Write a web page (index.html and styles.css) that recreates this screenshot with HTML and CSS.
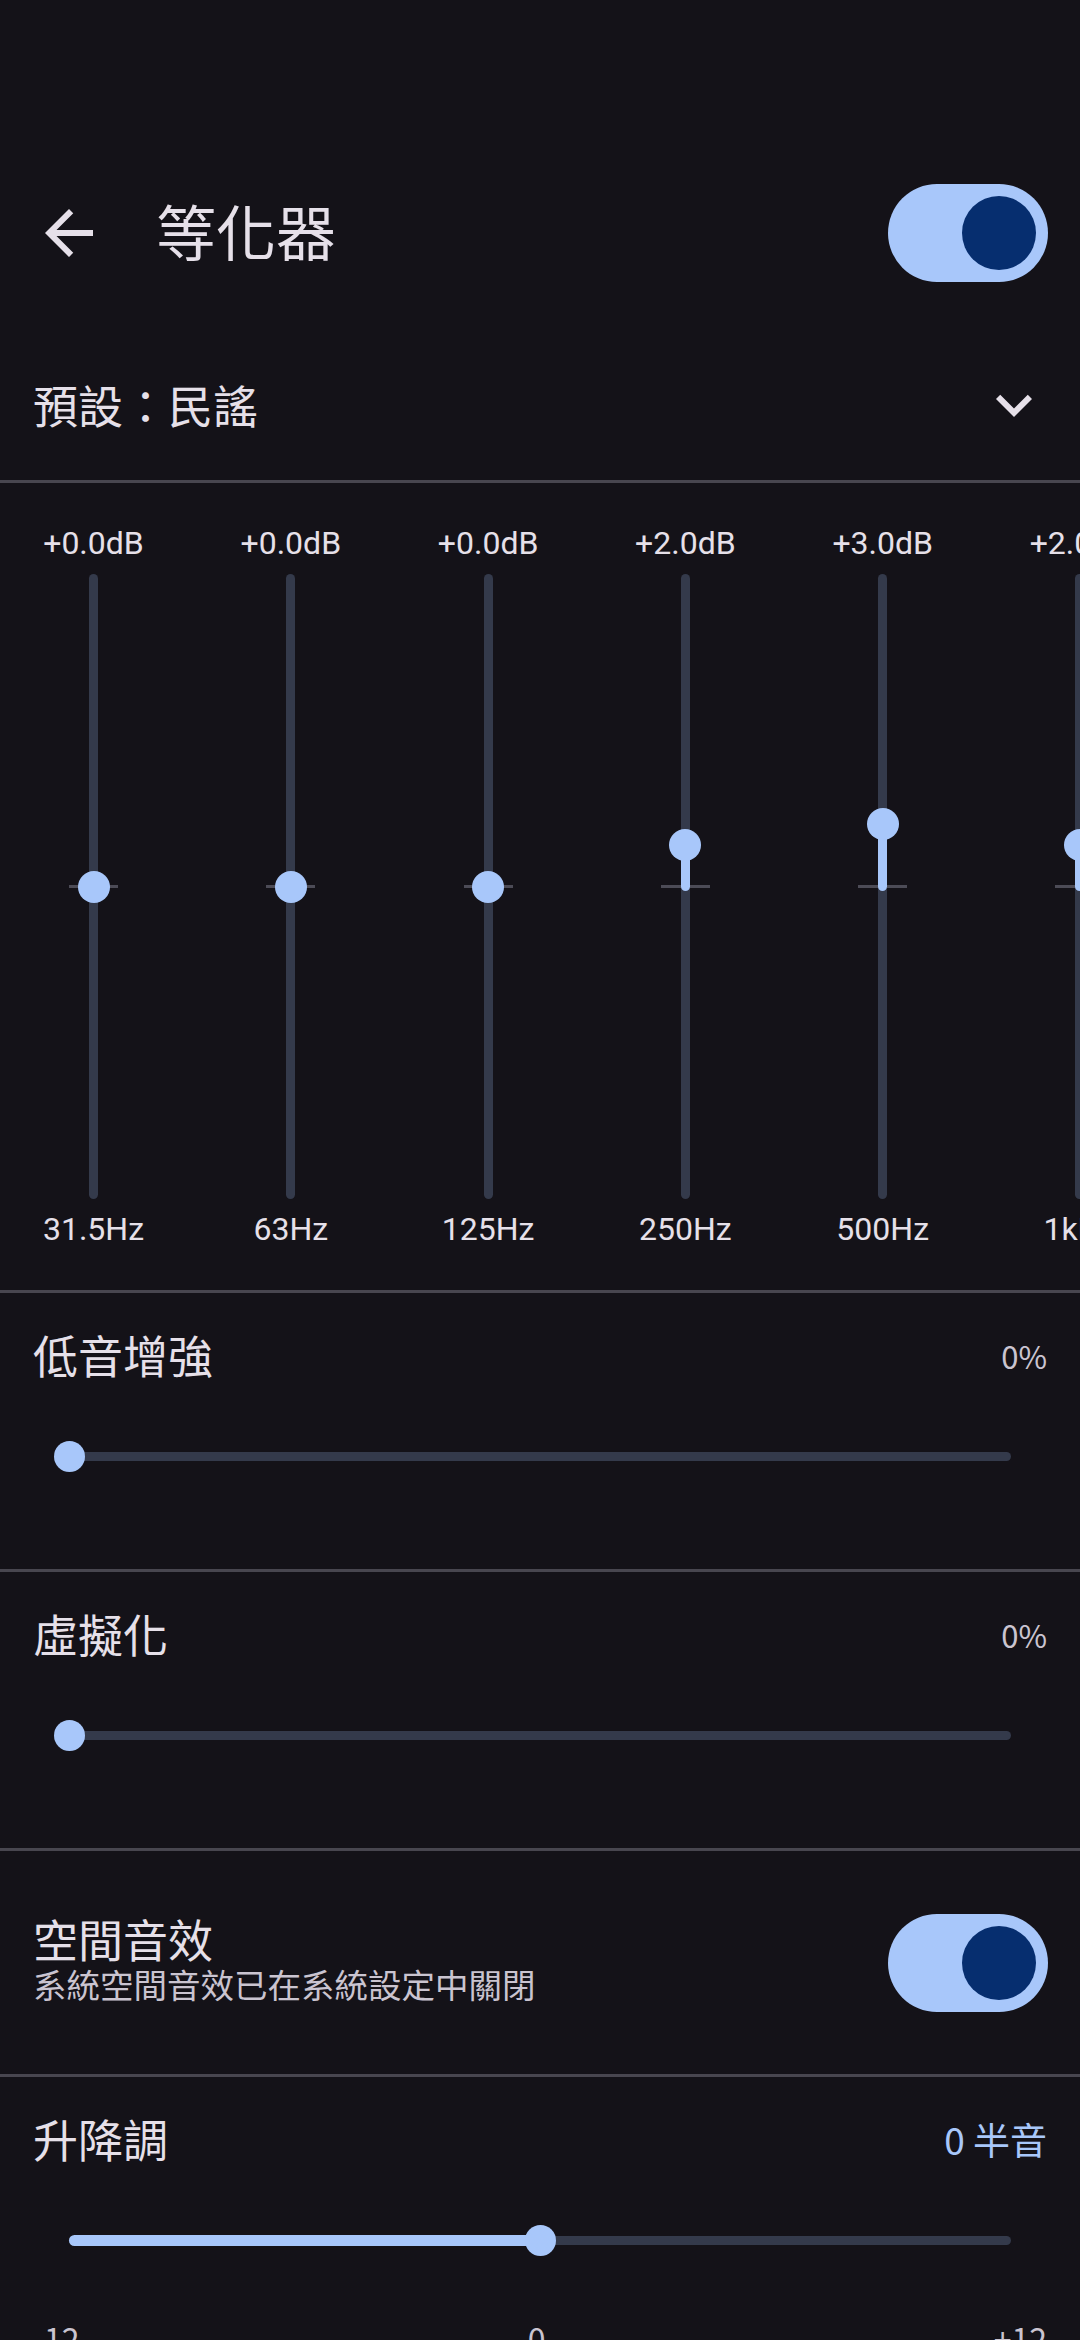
FILE: index.html
```html
<!DOCTYPE html>
<html lang="zh-Hant">
	<head>
		<meta charset="UTF-8" />
		<meta name="viewport" content="width=device-width, initial-scale=1.0" />
		<title>等化器</title>
		<link rel="stylesheet" href="styles.css">
	</head>
	<body>
		<div class="status-space"></div>
		<header class="app-bar">
			<svg class="icon back" viewBox="0 0 24 24" aria-label="返回">
				<path d="M20 11H7.830l5.59-5.59L12 4l-8 8 8 8 1.41-1.41L7.83 13H20v-2z" />
			</svg>
			<h1>等化器</h1>
			<div class="switch on"><span class="knob"></span></div>
		</header>

		<div class="preset-row">
			<span>預設：民謠</span>
			<svg class="icon chevron" viewBox="0 0 24 24">
				<path d="M16.59 8.59L12 13.17 7.41 8.59 6 10l6 6 6-6z" />
			</svg>
		</div>

		<section class="eq">
			<div class="band" style="--db: 0">
				<div class="band-val">+0.0dB</div>
				<div class="vtrack"><i class="tick"></i><i class="fill"></i><i class="thumb"></i></div>
				<div class="band-freq">31.5Hz</div>
			</div>
			<div class="band" style="--db: 0">
				<div class="band-val">+0.0dB</div>
				<div class="vtrack"><i class="tick"></i><i class="fill"></i><i class="thumb"></i></div>
				<div class="band-freq">63Hz</div>
			</div>
			<div class="band" style="--db: 0">
				<div class="band-val">+0.0dB</div>
				<div class="vtrack"><i class="tick"></i><i class="fill"></i><i class="thumb"></i></div>
				<div class="band-freq">125Hz</div>
			</div>
			<div class="band" style="--db: 2">
				<div class="band-val">+2.0dB</div>
				<div class="vtrack"><i class="tick"></i><i class="fill"></i><i class="thumb"></i></div>
				<div class="band-freq">250Hz</div>
			</div>
			<div class="band" style="--db: 3">
				<div class="band-val">+3.0dB</div>
				<div class="vtrack"><i class="tick"></i><i class="fill"></i><i class="thumb"></i></div>
				<div class="band-freq">500Hz</div>
			</div>
			<div class="band" style="--db: 2">
				<div class="band-val">+2.0dB</div>
				<div class="vtrack"><i class="tick"></i><i class="fill"></i><i class="thumb"></i></div>
				<div class="band-freq">1kHz</div>
			</div>
		</section>

		<!-- 低音增強 -->
		<section class="panel panel-slider">
			<div class="panel-head">
				<span class="panel-title">低音增強</span>
				<span class="panel-value">0%</span>
			</div>
			<div class="hslider" style="--pos: 0"><i class="active"></i><i class="thumb"></i></div>
		</section>

		<!-- 虛擬化 -->
		<section class="panel panel-slider">
			<div class="panel-head">
				<span class="panel-title">虛擬化</span>
				<span class="panel-value">0%</span>
			</div>
			<div class="hslider" style="--pos: 0"><i class="active"></i><i class="thumb"></i></div>
		</section>

		<!-- 空間音效 -->
		<section class="panel panel-switch">
			<div class="switch-text">
				<div class="panel-title">空間音效</div>
				<div class="panel-sub">系統空間音效已在系統設定中關閉</div>
			</div>
			<div class="switch on"><span class="knob"></span></div>
		</section>

		<!-- 升降調 -->
		<section class="panel panel-pitch">
			<div class="panel-head">
				<span class="panel-title">升降調</span>
				<span class="panel-value accent">0 半音</span>
			</div>
			<div class="hslider" style="--pos: 0.5"><i class="active"></i><i class="thumb"></i></div>
			<div class="scale">
				<span>-12</span>
				<span>0</span>
				<span>+12</span>
			</div>
		</section>
	</body>
</html>
```

FILE: styles.css
```css
body {
	margin: 0;
	width: 1080px;
	height: 2340px;
	overflow: hidden;
	background: #141218;
	color: #e6e0e9;
	font-family: "Noto Sans CJK TC", Roboto, sans-serif;
}
.status-space {
	height: 137px;
}
.icon {
	width: 72px;
	height: 72px;
	fill: #e6e0e9;
	flex-shrink: 0;
}
.app-bar {
	height: 192px;
	display: flex;
	align-items: center;
	padding: 0 32px 0 33px;
}
.app-bar h1 {
	margin: 0 0 6px 51px;
	font-size: 60px;
	font-weight: 400;
	line-height: 80px;
	flex: 1;
}
.switch {
	width: 160px;
	height: 98px;
	border-radius: 49px;
	background: #a8c7fa;
	display: flex;
	align-items: center;
	justify-content: flex-end;
	padding: 0 12px;
	box-sizing: border-box;
	flex-shrink: 0;
}
.switch .knob {
	width: 74px;
	height: 74px;
	border-radius: 50%;
	background: #062e6f;
}
.preset-row {
	height: 151px;
	box-sizing: border-box;
	padding: 1px 33px 0 33px;
	display: flex;
	align-items: center;
	justify-content: space-between;
	font-size: 45px;
	line-height: 58px;
}
.chevron {
	margin-right: -3px;
}

/* eq bands */
.eq {
	border-top: 3px solid #48464f;
	padding: 42px 0 43px 0;
	display: flex;
	gap: 10.3px;
	overflow: hidden;
}
.band {
	width: 187px;
	flex-shrink: 0;
	display: flex;
	flex-direction: column;
	align-items: center;
	font-family: Roboto, "Noto Sans CJK TC", sans-serif;
	font-size: 32px;
	line-height: 36px;
	color: #e6e0e9;
}
.band-val,
.band-freq {
	white-space: nowrap;
}
.vtrack {
	position: relative;
	width: 9px;
	height: 625px;
	margin: 13px 0 12px 0;
	border-radius: 5px;
	background: #343a4b;
}
.vtrack i {
	position: absolute;
	display: block;
}
.vtrack .tick {
	width: 49px;
	height: 3px;
	left: -20px;
	top: 311px;
	background: #4c4b56;
}
.vtrack .fill {
	left: 0;
	width: 9px;
	border-radius: 5px;
	top: calc(50% - var(--db) * 21px);
	height: calc(var(--db) * 21px + 4px);
	background: #a8c7fa;
}
.vtrack .thumb {
	width: 32px;
	height: 32px;
	border-radius: 50%;
	left: -11.5px;
	top: calc(50% - 16px - var(--db) * 21px);
	background: #a8c7fa;
}

/* panels */
.panel {
	border-top: 3px solid #48464f;
	padding: 0 33px;
	box-sizing: border-box;
}
.panel-slider {
	height: 279px;
	padding-top: 33px;
}
.panel-head {
	height: 58px;
	display: flex;
	align-items: center;
	justify-content: space-between;
}
.panel-title {
	font-size: 45px;
	line-height: 58px;
}
.panel-value {
	font-size: 31px;
	color: #cac4d0;
}
.panel-value.accent {
	font-size: 37px;
	color: #a8c7fa;
}
.hslider {
	position: relative;
	height: 31px;
	margin: 57px 36px 0 36px;
}
.hslider::before {
	content: "";
	position: absolute;
	left: 0;
	right: 0;
	top: 11px;
	height: 9px;
	border-radius: 5px;
	background: #343a4b;
}
.hslider i {
	position: absolute;
	display: block;
}
.hslider .active {
	left: 0;
	top: 10px;
	height: 11px;
	border-radius: 6px;
	width: calc(var(--pos) * 100%);
	background: #a8c7fa;
}
.hslider .thumb {
	width: 31px;
	height: 31px;
	border-radius: 50%;
	top: 0;
	left: calc(var(--pos) * 100% - 15.5px);
	background: #a8c7fa;
}
.panel-switch {
	height: 226px;
	display: flex;
	align-items: center;
	justify-content: space-between;
	padding-right: 32px;
}
.switch-text {
	margin-bottom: 8px;
}
.panel-switch .panel-title {
	line-height: 50px;
}
.panel-sub {
	font-size: 33.5px;
	line-height: 40px;
	color: #cac4d0;
}
.panel-pitch {
	padding-top: 33px;
}
.scale {
	display: flex;
	justify-content: space-between;
	margin-top: 62px;
	font-size: 32px;
	line-height: 40px;
	color: #cac4d0;
}
```
